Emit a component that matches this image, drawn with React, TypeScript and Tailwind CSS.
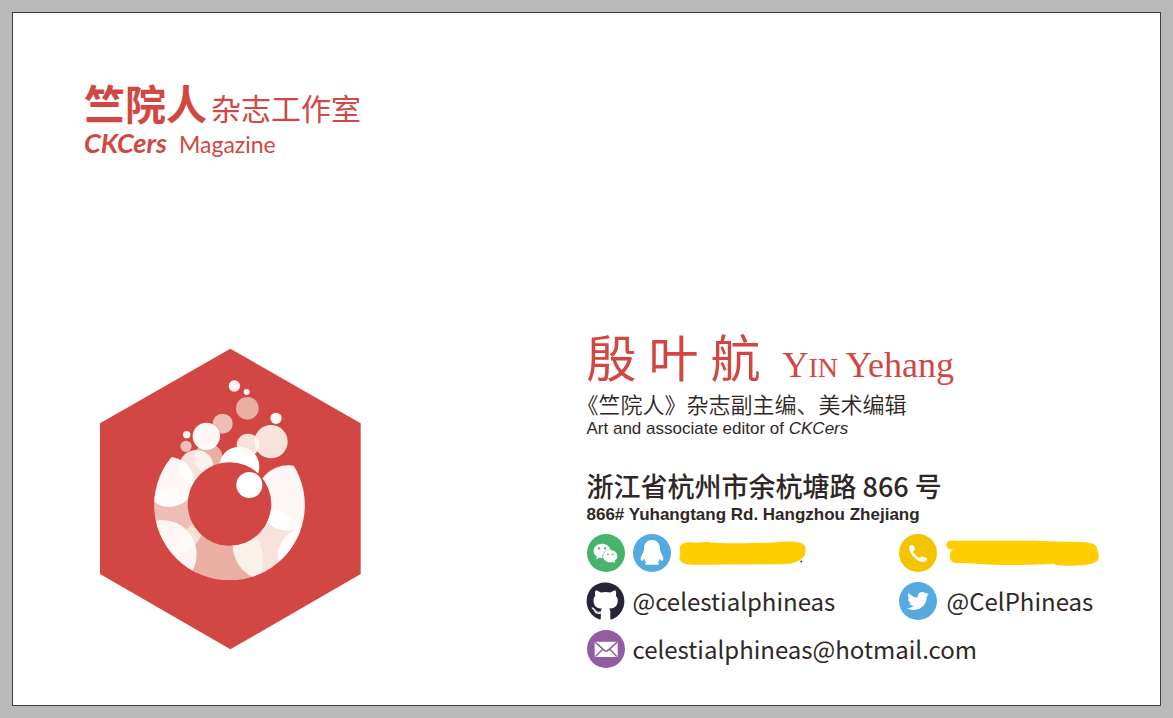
import type { ReactNode } from "react";
import { FaGithub, FaTwitter, FaWeixin } from "react-icons/fa";

type Bubble = { x: number; y: number; r: number; fill: string; alpha: number };

const SNOW = { fill: "#fffefe", alpha: 0.96 };
const CREAM = { fill: "#fdfbf6", alpha: 0.86 };
const BLUSH = { fill: "#fbfcf0", alpha: 0.66 };
const ROSE = { fill: "#f8f5e4", alpha: 0.6 };
const MIST = { fill: "#fefcfb", alpha: 0.9 };
const WHITE = { fill: "#ffffff", alpha: 1 };

const ringBubbles: Bubble[] = [
  { x: 240, y: 547, r: 102, ...BLUSH },
  { x: 386, y: 660, r: 133, ...ROSE },
  { x: 217, y: 643, r: 103, ...MIST },
  { x: 535, y: 615, r: 107, ...CREAM },
  { x: 652, y: 652, r: 90, ...SNOW },
  { x: 595, y: 474, r: 98, ...SNOW },
  { x: 355, y: 354, r: 43, ...ROSE },
  { x: 319, y: 382, r: 52, ...CREAM },
  { x: 238, y: 426, r: 75, ...SNOW },
  { x: 448, y: 380, r: 60, ...WHITE },
];

const freeBubbles: Bubble[] = [
  { x: 433, y: 138, r: 17, ...SNOW },
  { x: 470, y: 156, r: 9, ...SNOW },
  { x: 472, y: 205, r: 34, ...ROSE },
  { x: 558, y: 235, r: 17, ...SNOW },
  { x: 398, y: 251, r: 30, ...BLUSH },
  { x: 349, y: 289, r: 41, ...SNOW },
  { x: 290, y: 284, r: 11, ...SNOW },
  { x: 288, y: 319, r: 17, ...BLUSH },
  { x: 474, y: 315, r: 34, ...CREAM },
  { x: 543, y: 305, r: 50, ...CREAM },
  { x: 478, y: 435, r: 39, ...WHITE },
];

function Bubbles({ items }: { items: Bubble[] }) {
  return (
    <>
      {items.map((b) => (
        <circle key={`${b.x}-${b.y}`} cx={b.x} cy={b.y} r={b.r} fill={b.fill} fillOpacity={b.alpha} />
      ))}
    </>
  );
}

function Emblem() {
  return (
    <svg viewBox="30 24 786 906" className="h-[302px] w-[262px]" aria-hidden="true">
      <defs>
        <clipPath id="ring">
          <path
            clipRule="evenodd"
            d="M192.500 495a226 226 0 1 0 452 0a226 226 0 1 0 -452 0ZM293 492a125.500 125.500 0 1 0 251 0a125.500 125.500 0 1 0 -251 0Z"
          />
        </clipPath>
      </defs>
      <path d="M421 26L812 250V702L421 928L30 702V250Z" fill="#d24743" />
      <g clipPath="url(#ring)">
        <Bubbles items={ringBubbles} />
      </g>
      <Bubbles items={freeBubbles} />
    </svg>
  );
}

function Badge({ color, children }: { color: string; children: ReactNode }) {
  return (
    <span className={`flex size-[38px] shrink-0 items-center justify-center rounded-full text-white ${color}`}>
      {children}
    </span>
  );
}

function QqIcon() {
  return (
    <svg viewBox="0 0 114 114" className="size-[38px]" fill="currentColor" aria-hidden="true">
      <path d="M57 18C43 18 33 28 33 42C33 49 32 53 28 60C22 71 22 80 26 80C29 80 32 77 34 74C35 79 37 83 40 86C34 88 34 92 43 92H71C80 92 80 88 74 86C77 83 79 79 80 74C82 77 85 80 88 80C92 80 92 71 86 60C82 53 81 49 81 42C81 28 71 18 57 18Z" />
    </svg>
  );
}

function PhoneIcon() {
  return (
    <svg viewBox="0 0 114 114" className="size-[38px]" fill="currentColor" aria-hidden="true">
      <path d="M33 35C37 31 43 33 45 37L47 43C48 46 47 48 44 50C42 52 43 55 45 58L57 70C60 72 63 72 65 70C67 67 70 67 73 68L81 71C85 73 85 77 82 80C77 85 70 85 63 82C49 76 37 64 32 49C30 43 30 38 33 35Z" />
    </svg>
  );
}

function MailIcon() {
  return (
    <svg viewBox="0 0 114 114" className="size-[38px]" aria-hidden="true">
      <rect x="23" y="35" width="69" height="46" rx="3" fill="#fff" />
      <path
        d="M26 38L52 61Q57.500 66 63 61L89 38M27 78L47 58M88 78L68 58"
        fill="none"
        stroke="#925ba3"
        strokeWidth="4.500"
        strokeLinecap="round"
      />
    </svg>
  );
}

export default function App() {
  return (
    <div className="min-h-screen bg-[#b9b9b9] p-3 font-['Noto_Sans_CJK_SC',sans-serif] text-[#2f2725]">
      <main className="grid min-h-[694px] grid-cols-2 border border-[#3f3f3f] bg-white">
        <section className="flex flex-col">
          <header className="pt-[65px] pl-[71px] text-[#d24743]">
            <h1 className="flex items-baseline gap-1 leading-[48px]">
              <span className="text-[41px] font-bold">竺院人</span>
              <span className="text-[30px]">杂志工作室</span>
            </h1>
            <p className="flex items-baseline gap-3 leading-6">
              <span className="font-[Lato,sans-serif] text-[27px] font-bold italic">CKCers</span>
              <span className="font-[Lato,sans-serif] text-[23px]">Magazine</span>
            </p>
          </header>
          <div className="mt-auto mb-[55px] pl-[87px]">
            <Emblem />
          </div>
        </section>

        <section className="flex flex-col pt-[321px]">
          <h2 className="flex items-baseline gap-[22px] leading-[42px] text-[#d24743]">
            <span className="flex gap-3 text-[50px]">
              <span>殷</span>
              <span>叶</span>
              <span>航</span>
            </span>
            <span className="font-['Liberation_Serif',serif] text-[36px]">
              Y<span className="text-[28px]">IN</span> Yehang
            </span>
          </h2>
          <p className="-ml-2.5 text-[22px] leading-7 font-[350]">《竺院人》杂志副主编、美术编辑</p>
          <p className="font-['Liberation_Sans',sans-serif] text-[17px] leading-6">
            Art and associate editor of <em>CKCers</em>
          </p>

          <address className="mt-7 not-italic">
            <p className="text-[27px] leading-[34px] font-medium">浙江省杭州市余杭塘路 866 号</p>
            <p className="font-['Liberation_Sans',sans-serif] text-[17px] leading-6 font-bold">
              866# Yuhangtang Rd. Hangzhou Zhejiang
            </p>
          </address>

          <div className="mt-[7px] grid grid-cols-[312px_1fr] gap-y-2.5 text-2xl leading-[38px]">
            <div className="flex items-center gap-2">
              <Badge color="bg-[#48b36a]">
                <FaWeixin className="size-[25px]" />
              </Badge>
              <Badge color="bg-[#55aae0]">
                <QqIcon />
              </Badge>
              <svg viewBox="310 52 381 74" className="h-[25px] w-[127px]" aria-hidden="true">
                <circle cx="677" cy="113" r="3" fill="#2f2725" />
                <path
                  d="M312 75C313 60 329 53 350 56C380 58 390 52 405 56C450 60 560 59 620 54C650 51 688 55 689 70C692 84 688 98 678 104C668 116 645 121 620 121C540 121 440 123 350 123C325 123 311 114 311 102C312 96 316 93 313 87Z"
                  fill="#ffcd00"
                />
              </svg>
            </div>
            <div className="flex items-center gap-2">
              <Badge color="bg-[#f5c400]">
                <PhoneIcon />
              </Badge>
              <svg viewBox="177 46 465 79" className="h-[26px] w-[155px]" aria-hidden="true">
                <path
                  d="M190 48H420C480 48 540 52 590 52C625 53 638 62 636 76C641 84 643 96 640 104C634 120 600 124 560 124C530 124 512 124 504 118C460 121 380 123 320 121C280 119 250 115 205 116C190 113 188 98 189 90C190 80 195 76 200 74C187 76 178 70 178 61C178 53 183 48 190 48Z"
                  fill="#ffcd00"
                />
              </svg>
            </div>
            <a href="https://github.com/celestialphineas" className="flex items-center gap-2">
              <span className="flex size-[38px] shrink-0 items-center justify-center text-[#262538]">
                <FaGithub className="size-[39px] shrink-0" />
              </span>
              @celestialphineas
            </a>
            <a href="https://twitter.com/CelPhineas" className="flex items-center gap-2.5">
              <Badge color="bg-[#55aae0]">
                <FaTwitter className="size-[22px]" />
              </Badge>
              @CelPhineas
            </a>
            <a
              href="mailto:celestialphineas@hotmail.com"
              className="col-span-2 flex items-center gap-2"
            >
              <Badge color="bg-[#925ba3]">
                <MailIcon />
              </Badge>
              celestialphineas@hotmail.com
            </a>
          </div>
        </section>
      </main>
    </div>
  );
}
